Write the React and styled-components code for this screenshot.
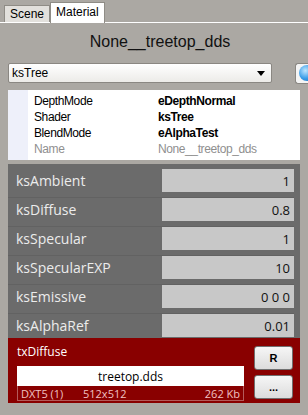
import React from "react";
import styled, { createGlobalStyle } from "styled-components";

const Global = createGlobalStyle`
  html, body {
    margin: 0;
    padding: 0;
    background: #aba8a3;
  }
  body {
    font-family: "DejaVu Sans", "Liberation Sans", sans-serif;
  }
`;

const Page = styled.div`
  width: 308px;
  height: 415px;
  overflow: hidden;
  background: #aba8a3;
  display: flex;
  flex-direction: column;
`;

const TabBar = styled.div`
  height: 22px;
  display: flex;
  align-items: flex-end;
  padding-left: 4px;
  border-bottom: 1px solid #ffffff;
  background: #aba8a3;
`;

const Tab = styled.div`
  font-family: "Liberation Sans", Arial, sans-serif;
  font-size: 12px;
  color: #000;
  box-sizing: border-box;
  padding: 0 5px;
  display: flex;
  align-items: center;
  height: ${(p) => (p.$active ? "21px" : "17px")};
  background: ${(p) => (p.$active ? "#ffffff" : "#e2e0dc")};
  border: 1px solid #8f8c86;
  border-bottom: none;
  margin-bottom: ${(p) => (p.$active ? "-1px" : "0")};
  padding-bottom: ${(p) => (p.$active ? "3px" : "0")};
`;

const Panel = styled.div`
  flex: 1;
  display: flex;
  flex-direction: column;
  padding: 0 8px;
`;

const Title = styled.div`
  font-family: "Liberation Sans", Arial, sans-serif;
  font-size: 16px;
  color: #111;
  text-align: center;
  height: 37px;
  line-height: 37px;
  padding-left: 12px;
`;

const SelectRow = styled.div`
  display: flex;
  align-items: center;
  height: 22px;
  margin-top: 2px;
`;

const Select = styled.div`
  flex-shrink: 0;
  width: 264px;
  height: 20px;
  box-sizing: border-box;
  border: 1px solid #8a8782;
  border-radius: 2px;
  background: linear-gradient(#ffffff, #ecebe8);
  display: flex;
  align-items: center;
  justify-content: space-between;
  padding: 0 6px 0 3px;
  font-family: "Liberation Sans", Arial, sans-serif;
  font-size: 12px;
  color: #000;
`;

const Arrow = styled.span`
  width: 0;
  height: 0;
  border-left: 4px solid transparent;
  border-right: 4px solid transparent;
  border-top: 5px solid #000;
`;

const BlueButton = styled.div`
  flex-shrink: 0;
  margin-left: 23px;
  width: 22px;
  height: 21px;
  box-sizing: border-box;
  border: 1px solid #8a8782;
  border-right: none;
  border-radius: 3px 0 0 3px;
  background: #f4f4f4;
  display: flex;
  align-items: center;
  padding-left: 3px;
`;

const Orb = styled.div`
  width: 16px;
  height: 16px;
  border-radius: 50%;
  background: radial-gradient(circle at 40% 35%, #bfe6ff, #3b9de8 55%, #1a6cc0);
`;

const Grid = styled.div`
  margin-top: 6px;
  height: 70px;
  box-sizing: border-box;
  background: #ffffff;
  display: flex;
  flex-direction: column;
  padding-top: 3px;
  position: relative;
`;

const GridMargin = styled.div`
  position: absolute;
  left: 0;
  top: 0;
  bottom: 0;
  width: 20px;
  background: #eef0fa;
`;

const GridRow = styled.div`
  display: grid;
  grid-template-columns: 124px 1fr;
  height: 16px;
  align-items: center;
  font-family: "Liberation Sans", Arial, sans-serif;
  font-size: 12px;
  letter-spacing: -0.4px;
  padding-left: 26px;
  position: relative;
  color: ${(p) => (p.$muted ? "#8f8f8f" : "#000")};
`;

const GridValue = styled.span`
  font-weight: ${(p) => (p.$bold ? "bold" : "normal")};
`;

const Params = styled.div`
  margin-top: 4px;
  background: #6b6b6b;
  display: flex;
  flex-direction: column;
  padding: 5px 6px 1px 0;
`;

const ParamRow = styled.div`
  display: flex;
  align-items: flex-start;
  height: 29px;
  border-bottom: 1px solid #626262;
  box-sizing: border-box;
  &:last-child {
    height: 23px;
    border-bottom: none;
  }
`;

const ParamLabel = styled.div`
  width: 154px;
  height: 23px;
  line-height: 23px;
  padding-left: 8px;
  box-sizing: border-box;
  font-family: "Open Sans", "DejaVu Sans", sans-serif;
  font-size: 14px;
  color: #ececec;
`;

const ParamValue = styled.div`
  flex: 1;
  height: 23px;
  background: #c8c8c8;
  display: flex;
  align-items: center;
  justify-content: flex-end;
  padding-right: 4px;
  font-family: "Open Sans", "DejaVu Sans", sans-serif;
  font-size: 13px;
  color: #111;
`;

const Texture = styled.div`
  background: #890000;
  height: 65px;
  box-sizing: border-box;
  display: flex;
  padding: 6px 7px 0 9px;
  gap: 10px;
`;

const TexMain = styled.div`
  flex: 1;
  display: flex;
  flex-direction: column;
`;

const TexName = styled.div`
  font-family: "Open Sans", "DejaVu Sans", sans-serif;
  font-size: 12px;
  color: #ffffff;
  height: 22px;
  line-height: 16px;
`;

const FileBox = styled.div`
  background: #ffffff;
  height: 20px;
  display: flex;
  align-items: center;
  justify-content: center;
  font-family: "Open Sans", "DejaVu Sans", sans-serif;
  font-size: 12px;
  color: #000;
`;

const InfoLine = styled.div`
  height: 14px;
  border: 1px solid #b45a5a;
  border-top: none;
  display: flex;
  align-items: center;
  padding: 0 3px;
  font-family: "Open Sans", "DejaVu Sans", sans-serif;
  font-size: 11px;
  color: #f0c0c0;
`;

const InfoItem = styled.span`
  width: ${(p) => p.$w || "auto"};
  margin-left: ${(p) => (p.$right ? "auto" : "0")};
`;

const ButtonCol = styled.div`
  display: flex;
  flex-direction: column;
  gap: 5px;
  padding-top: 2px;
`;

const SmallButton = styled.div`
  width: 39px;
  height: 24px;
  box-sizing: border-box;
  border: 1px solid #707070;
  border-radius: 3px;
  background: linear-gradient(#f6f6f6, #dcdcdc);
  display: flex;
  align-items: center;
  justify-content: center;
  font-family: "Liberation Sans", Arial, sans-serif;
  font-size: 11px;
  font-weight: bold;
  color: #000;
`;

const params = [
  ["ksAmbient", "1"],
  ["ksDiffuse", "0.8"],
  ["ksSpecular", "1"],
  ["ksSpecularEXP", "10"],
  ["ksEmissive", "0 0 0"],
  ["ksAlphaRef", "0.01"],
];

const gridRows = [
  ["DepthMode", "eDepthNormal", true],
  ["Shader", "ksTree", true],
  ["BlendMode", "eAlphaTest", true],
  ["Name", "None__treetop_dds", false],
];

export default function App() {
  return (
    <Page>
      <Global />
      <TabBar>
        <Tab>Scene</Tab>
        <Tab $active>Material</Tab>
      </TabBar>
      <Panel>
        <Title>None__treetop_dds</Title>
        <SelectRow>
          <Select>
            <span>ksTree</span>
            <Arrow />
          </Select>
          <BlueButton>
            <Orb />
          </BlueButton>
        </SelectRow>
        <Grid>
          <GridMargin />
          {gridRows.map(([k, v, bold]) => (
            <GridRow key={k} $muted={!bold}>
              <span>{k}</span>
              <GridValue $bold={bold}>{v}</GridValue>
            </GridRow>
          ))}
        </Grid>
        <Params>
          {params.map(([k, v]) => (
            <ParamRow key={k}>
              <ParamLabel>{k}</ParamLabel>
              <ParamValue>{v}</ParamValue>
            </ParamRow>
          ))}
        </Params>
        <Texture>
          <TexMain>
            <TexName>txDiffuse</TexName>
            <FileBox>treetop.dds</FileBox>
            <InfoLine>
              <InfoItem $w="62px">DXT5 (1)</InfoItem>
              <InfoItem>512x512</InfoItem>
              <InfoItem $right>262 Kb</InfoItem>
            </InfoLine>
          </TexMain>
          <ButtonCol>
            <SmallButton>R</SmallButton>
            <SmallButton>...</SmallButton>
          </ButtonCol>
        </Texture>
      </Panel>
    </Page>
  );
}
